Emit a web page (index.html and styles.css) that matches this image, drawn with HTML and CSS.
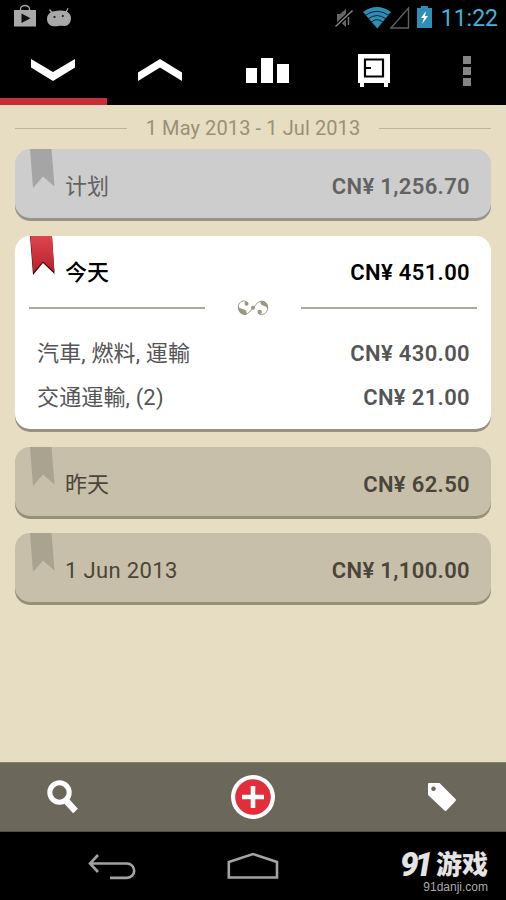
FILE: index.html
```html
<!DOCTYPE html>
<html lang="zh">
<head>
<meta charset="utf-8">
<title>Expenses</title>
<link rel="stylesheet" href="styles.css">
</head>
<body>
<div class="screen">
  <header class="status">
    <svg class="status-left" width="80" height="36" viewBox="0 0 80 36">
      <path d="M14 10H36V26.500H14Z" fill="#a9a9a9"/>
      <path d="M20.500 11V9a4.500 3.500 0 0 1 9 0v2" fill="none" stroke="#a9a9a9" stroke-width="1.300"/>
      <path d="M21.500 13.500v9.500l9-4.700z" fill="#111"/>
      <path d="M47 19c0-4 3-7 6-7.500 5-1 9-1.500 12-.5 4 1 6 4 6 7.500 0 4-3 7.500-6.500 7.500-3 0-5-.5-7 .2C52 27 47 25 47 19z" fill="#a9a9a9"/>
      <path d="M49.500 9.500l3 4M68 8.300l-2 4" stroke="#a9a9a9" stroke-width="1.300"/>
      <circle cx="54.500" cy="17" r="1.100" fill="#111"/><circle cx="62.800" cy="16" r="1.100" fill="#111"/>
    </svg>
    <div class="status-right">
      <svg width="106" height="36" viewBox="330 0 106 36">
        <path d="M337 14h3l6-5v18l-6-5h-3z" fill="#666"/>
        <path d="M335.500 26.500l17-16" stroke="#000" stroke-width="4"/>
        <path d="M335.500 26.500l17-16" stroke="#888" stroke-width="1.500"/>
        <path d="M348.500 17v8" stroke="#777" stroke-width="1.500"/>
        <path d="M363 12Q377 2 391 12L377.300 28.500Z" fill="#2f8eb5"/>
        <path d="M365 15.500Q377 7 389 15.500M368 19Q377 12 386 19M371 22.300Q377 17 383 22.300" fill="none" stroke="#06222e" stroke-width="1"/>
        <path d="M391 28L408.500 8V28Z" fill="none" stroke="#606060" stroke-width="1.400"/>
        <path d="M417 8h4V6h7v2h4v20h-15z" fill="#2f8eb5"/>
        <path d="M426 11l-5 7h3l-2 6 6-8h-3z" fill="#fff"/>
      </svg>
      <span class="clock">11:22</span>
    </div>
  </header>

  <nav class="tabs">
    <a class="tab tab-active"><svg width="46" height="24" viewBox="0 0 46 24"><path d="M1 1L23 14L45 1V9.500L23 23L1 9.500Z" fill="#fff"/></svg></a>
    <a class="tab"><svg width="46" height="24" viewBox="0 0 46 24"><path d="M1 23L23 9.500L45 23V14.500L23 1L1 14.500Z" fill="#fff"/></svg></a>
    <a class="tab tab-bars"><svg width="43" height="25" viewBox="0 0 43 25"><path d="M0 10h11v15H0zM15 0h12v25H15zM31 6h12v19H31z" fill="#fff"/></svg></a>
    <a class="tab tab-safe"><svg width="32" height="33" viewBox="0 0 32 33"><path d="M0 0h32v29h-2v4h-4v-4H6v4H2v-4H0z" fill="#fff"/><path d="M7 5.500h18v17H7zM7 14h6" fill="none" stroke="#000" stroke-width="2.200"/></svg></a>
    <a class="menu"><i></i><i></i><i></i></a>
  </nav>

  <main class="content">
    <div class="range"><hr><span>1 May 2013 - 1 Jul 2013</span><hr></div>

    <section class="card planned">
      <svg class="ribbon" width="26" height="40" viewBox="0 0 26 40"><path d="M1 0H22.500L25.500 37.500L14 27.500L4 39Z"/></svg>
      <div class="row"><span class="day cjk">计划</span><b>CN¥ 1,256.70</b></div>
    </section>

    <section class="card today">
      <svg class="ribbon" width="26" height="40" viewBox="0 0 26 40">
        <defs><linearGradient id="red" x2="0" y2="1"><stop stop-color="#e0444e"/><stop offset="1" stop-color="#b6202c"/></linearGradient></defs>
        <path class="edge" d="M1 0H23L25.500 38L14 27L4 39Z"/><path d="M1.500 0H23L25.500 36L14 25.500L4.300 36.500Z" fill="url(#red)"/>
      </svg>
      <div class="row"><span class="day cjk">今天</span><b>CN¥ 451.00</b></div>
      <div class="divider"><hr>
        <svg width="32" height="16" viewBox="0 0 32 16">
          <path d="M10.500 2.500C7-.5 2 1 1.300 6.500 1 13 8 16.500 12.500 12L19 4.500C22-.5 30.700 0 30.700 7.500c0 6-5.500 8.500-9.200 6" fill="none" stroke="#9a9785" stroke-width="1"/>
          <path d="M1 6c2 4 7 2 8.500 5.500V15C4 15.500 .5 11 1 6zM31 9c-2-4-6-2.500-7.500-5.500V1C28 .5 31.500 4 31 9z" fill="#9a9785"/>
          <circle cx="9.500" cy="3.700" r="2" fill="#9a9785"/><circle cx="22.700" cy="12" r="2.200" fill="#9a9785"/><circle cx="16" cy="7.800" r="2" fill="#9a9785"/>
        </svg>
      <hr></div>
      <div class="row item first"><span class="cjk">汽車, 燃料, 運輸</span><b>CN¥ 430.00</b></div>
      <div class="row item"><span class="cjk">交通運輸, (2)</span><b>CN¥ 21.00</b></div>
    </section>

    <section class="card past">
      <svg class="ribbon" width="26" height="40" viewBox="0 0 26 40"><path d="M1 0H22.500L25.500 37.500L14 27.500L4 39Z"/></svg>
      <div class="row"><span class="day cjk">昨天</span><b>CN¥ 62.50</b></div>
    </section>

    <section class="card past">
      <svg class="ribbon" width="26" height="40" viewBox="0 0 26 40"><path d="M1 0H22.500L25.500 37.500L14 27.500L4 39Z"/></svg>
      <div class="row"><span class="day">1 Jun 2013</span><b>CN¥ 1,100.00</b></div>
    </section>
  </main>

  <div class="actions">
    <svg width="32" height="34" viewBox="0 0 32 34"><circle cx="12.500" cy="12.500" r="9.700" fill="none" stroke="#fff" stroke-width="5"/><path d="M18.500 20L28.500 31" stroke="#fff" stroke-width="6.500"/></svg>
    <svg width="44" height="44" viewBox="0 0 44 44"><circle cx="22" cy="22" r="22" fill="#fff"/><circle cx="22" cy="22" r="17.800" fill="#e22d3a"/><path d="M11 22H33M22 11V33" stroke="#fff" stroke-width="4.600"/></svg>
    <svg width="30" height="30" viewBox="0 0 30 30"><path fill-rule="evenodd" d="M2 1h10.500L28.500 17q1 1 0 2L19.500 28.500q-1 1-2 0L1 13V2q0-1 1-1zM6.500 4.500a2.300 2.300 0 1 0 .01 0z" fill="#fff"/></svg>
  </div>

  <footer class="system">
    <svg class="back" width="48" height="28" viewBox="0 0 48 28"><path d="M10 2L2 10.500L10 19M2 10.500H39a7.200 7.200 0 0 1 0 14.400H22" fill="none" stroke="#a3a3a3" stroke-width="2.600"/></svg>
    <svg class="home" width="52" height="28" viewBox="0 0 52 28"><path d="M1.800 10L26 2L50 10V25.500H1.800Z" fill="none" stroke="#a3a3a3" stroke-width="2.600"/></svg>
    <div class="brand"><div class="brand-name"><i>91</i><span>游戏</span></div><div class="brand-site">91danji.com</div></div>
  </footer>
</div>
</body>
</html>
```

FILE: styles.css
```css
* { box-sizing: border-box; }
body { margin: 0; background: #000; font-family: Roboto, "Noto Sans CJK SC", sans-serif; }
svg { display: block; flex: none; }
hr { margin: 0; border: 0; }
.screen { width: 506px; height: 900px; display: flex; flex-direction: column; background: #000; overflow: hidden; }

.status { height: 36px; display: flex; justify-content: space-between; }
.status-right { display: flex; padding-right: 8px; }
.clock { width: 62px; text-align: right; color: #43b3dc; font-size: 23px; line-height: 37px; white-space: nowrap; }

.tabs { height: 69px; display: flex; }
.tab { width: 107px; display: flex; justify-content: center; padding: 22px 1px 0 0; }
.tab-active { border-bottom: 7px solid #c72e39; }
.tab-safe { padding: 18px 2px 0 0; }
.menu { flex: 1; display: flex; flex-direction: column; align-items: center; gap: 3px; padding-top: 20px; }
.menu i { width: 8px; height: 8px; background: #858585; }

.content { height: 657px; padding: 12px 15px 0; background: #e6ddc2; }
.range { height: 32px; padding-bottom: 9px; display: flex; align-items: center; justify-content: space-between; color: #9a9078; font-size: 20px; line-height: 23px; letter-spacing: .1px; white-space: nowrap; }
.range hr { width: 112px; height: 1px; background: #bfb598; }

.card { position: relative; height: 72px; margin-bottom: 14px; width: 476px; padding: 15px 21px 0 22px; border-radius: 15px; color: #4b4539; background: #c7bfaa; box-shadow: inset 0 -3px 0 #979079; font-size: 22px; }
.ribbon { position: absolute; left: 14px; top: 0; fill: #a9a38f; }
.row { height: 45px; display: flex; align-items: center; justify-content: space-between; line-height: 32px; letter-spacing: .35px; white-space: nowrap; }
.row b { font-weight: 600; }
.cjk { letter-spacing: 0; }
.day { padding-left: 28px; }
.planned { margin-bottom: 15px; background: #cdcdcd; box-shadow: inset 0 -3px 0 #96948b; color: #626262; }
.planned .ribbon { fill: #a5a5a5; }
.today { height: 196px; margin-bottom: 15px; padding-top: 14px; background: #fff; color: #000; box-shadow: inset 0 -3px 0 #96917f; }
.today .day { font-weight: 500; }
.edge { fill: #43080e; }
.divider { height: 26px; margin: 0 -7px 0 -8px; display: flex; align-items: center; justify-content: space-between; }
.divider hr { width: 176px; height: 2px; background: #aaa899; }
.item { height: 44px; color: #555; }
.item .cjk { letter-spacing: .15px; }
.first { margin-top: 11px; }

.actions { height: 70px; padding: 0 49px 0 47px; display: flex; align-items: center; justify-content: space-between; background: #6b675a; border-top: 1px solid #858069; border-bottom: 1px solid #514e45; }

.system { height: 68px; display: flex; }
.back { margin: 21px 0 0 88px; }
.home { margin: 20px 0 0 91px; }
.brand { margin: 17px 0 0 auto; padding-right: 18px; color: #e4e4e4; text-align: right; }
.brand-name { display: flex; align-items: center; justify-content: flex-end; gap: 3px; height: 31px; font-size: 26px; line-height: 28px; font-weight: 900; }
.brand-name i { font-size: 33px; letter-spacing: -4px; padding-right: 4px; }
.brand-site { color: #aaa; font: 12px/14px "Liberation Sans", sans-serif; }
```
